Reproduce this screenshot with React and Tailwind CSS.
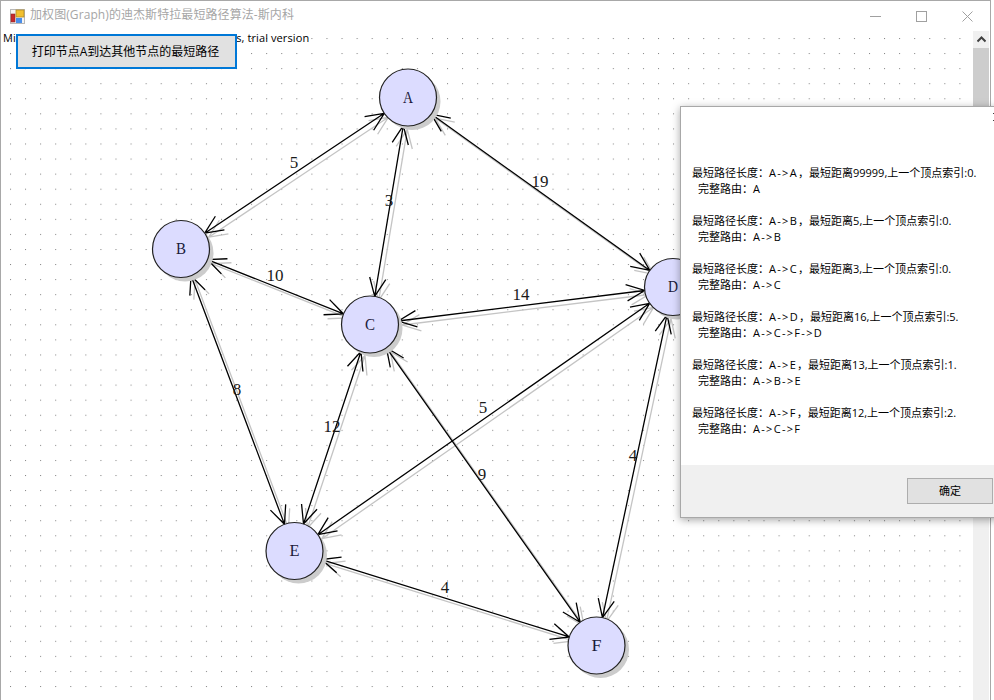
const CJK = '"Open Sans", "Noto Sans CJK SC", sans-serif';

const nodes = {
    A: [408, 97.5],
    B: [181, 249],
    C: [370, 324.5],
    D: [673, 287],
    E: [294.5, 551],
    F: [596.5, 645.5],
};

const edges = [
    ['A', 'B'], ['A', 'C'], ['A', 'D'], ['B', 'C'], ['C', 'D'],
    ['B', 'E'], ['C', 'E'], ['D', 'E'], ['C', 'F'], ['D', 'F'], ['E', 'F'],
];

const labels = [
    ['5', 294, 168], ['3', 389, 206], ['19', 540, 187], ['10', 275, 281], ['14', 521, 300],
    ['8', 237, 395], ['12', 332, 432], ['5', 483, 413], ['9', 482, 480], ['4', 633, 461], ['4', 445, 593],
];

const results = [
    ['A->A', '99999,', '0', 'A'],
    ['A->B', '5,', '0', 'A->B'],
    ['A->C', '3,', '0', 'A->C'],
    ['A->D', '16,', '5', 'A->C->F->D'],
    ['A->E', '13,', '1', 'A->B->E'],
    ['A->F', '12,', '2', 'A->C->F'],
];

const R = 28.5;

function head(x, y, ang) {
    const len = 20;
    const spread = 0.42;
    const p1 = [x + len * Math.cos(ang + spread), y + len * Math.sin(ang + spread)];
    const p2 = [x + len * Math.cos(ang - spread), y + len * Math.sin(ang - spread)];
    return `M${p1[0]} ${p1[1]}L${x} ${y}L${p2[0]} ${p2[1]}`;
}

function edgePath(a, b) {
    const [x1, y1] = nodes[a];
    const [x2, y2] = nodes[b];
    const ang = Math.atan2(y2 - y1, x2 - x1);
    const sx = x1 + R * Math.cos(ang);
    const sy = y1 + R * Math.sin(ang);
    const ex = x2 - R * Math.cos(ang);
    const ey = y2 - R * Math.sin(ang);
    return `M${sx} ${sy}L${ex} ${ey}` + head(sx, sy, ang) + head(ex, ey, ang + Math.PI);
}

function Graph() {
    return (
        <svg width="973" height="669" viewBox="1 31 973 669" className="absolute left-0 top-0">
            <defs>
                <pattern id="dots" x="10" y="38" width="15.07" height="15.07" patternUnits="userSpaceOnUse">
                    <rect width="1" height="1" fill="#808080" />
                </pattern>
            </defs>
            <rect x="0" y="31" width="975" height="671" fill="url(#dots)" />
            {edges.map(([a, b]) => (
                <path key={`s${a}${b}`} d={edgePath(a, b)} transform="translate(4 4)" fill="none" stroke="#c4c4c4" strokeWidth="1.3" />
            ))}
            {edges.map(([a, b]) => (
                <path key={a + b} d={edgePath(a, b)} fill="none" stroke="#000000" strokeWidth="1.3" />
            ))}
            {Object.entries(nodes).map(([name, [x, y]]) => (
                <g key={name}>
                    <circle cx={x + 4} cy={y + 4} r={R} fill="#cccccc" />
                    <circle cx={x} cy={y} r={R} fill="#dcdcff" stroke="#222222" strokeWidth="1.2" />
                    <text x={x - 5} y={y + 5} textLength="10" lengthAdjust="spacingAndGlyphs" fontFamily='"Liberation Serif", serif' fontSize="17" fill="#1a1a3a">{name}</text>
                </g>
            ))}
            {labels.map(([t, x, y], i) => (
                <text key={i} x={x} y={y} textAnchor="middle" fontFamily='"Liberation Serif", serif' fontSize="17" fill="#1a1a1a">{t}</text>
            ))}
        </svg>
    );
}

function AppIcon() {
    return (
        <svg width="15" height="15" viewBox="0 0 15 15">
            <rect x="0.5" y="0.5" width="14" height="14" fill="#f4f4f4" stroke="#b8b8b8" />
            <rect x="1" y="5" width="4" height="8" fill="#c8282c" stroke="#8a2a28" strokeWidth="0.6" />
            <rect x="6" y="1" width="8" height="7" fill="#f2c02e" stroke="#b08a28" strokeWidth="0.8" />
            <rect x="6" y="9" width="6" height="5" fill="#4a8ee8" />
        </svg>
    );
}

function TitleBar() {
    return (
        <div className="h-[30px] shrink-0 flex items-center pl-[9px] bg-white">
            <AppIcon />
            <span className="ml-[5px] text-[12px] tracking-[0.08px] text-[#a6a6a6] -mt-[2px]" style={{ fontFamily: CJK }}>加权图(Graph)的迪杰斯特拉最短路径算法-斯内科</span>
            <div className="ml-auto flex items-center mr-[17px] gap-[35px]">
                <svg width="11" height="11" viewBox="0 0 11 11"><path d="M0 5.5H11" stroke="#a0a0a0" /></svg>
                <svg width="11" height="11" viewBox="0 0 11 11"><rect x="0.5" y="0.5" width="10" height="10" fill="none" stroke="#a0a0a0" /></svg>
                <svg width="11" height="11" viewBox="0 0 11 11"><path d="M0.5 0.5L10.5 10.5M10.5 0.5L0.5 10.5" stroke="#a0a0a0" /></svg>
            </div>
        </div>
    );
}

function Scrollbar() {
    return (
        <div className="w-[16px] shrink-0 bg-[#f0f0f0] flex flex-col">
            <div className="h-[17px] flex items-center justify-center">
                <svg width="9" height="7" viewBox="0 0 9 7"><path d="M0.5 5.5L4.5 1.5L8.5 5.5" fill="none" stroke="#404040" strokeWidth="2" /></svg>
            </div>
            <div className="h-[420px] bg-[#cdcdcd]" />
        </div>
    );
}

function Arrow({ children }) {
    return <span className="tracking-[1.3px]">{children}</span>;
}

function ResultDialog() {
    return (
        <div className="absolute left-[680px] top-[106px] w-[320px] h-[412px] bg-white border border-[#a8a8a8] shadow-[0_2px_8px_rgba(0,0,0,0.35)] flex flex-col">
            <svg width="5" height="9" viewBox="0 0 5 9" className="absolute left-[312px] top-[6px]"><path d="M0 0L4 4L0 8" fill="none" stroke="#404040" /></svg>
            <div className="flex-1 pl-[11px] pt-[58px] text-[11px] leading-[16px] text-black" style={{ fontFamily: CJK }}>
                {results.map(([path, dist, prev, route], i) => (
                    <div key={i} className="mb-[16px] whitespace-nowrap">
                        <div>最短路径长度：<Arrow>{path}</Arrow>，最短距离{dist}上一个顶点索引:{prev}.</div>
                        <div className="pl-[6px]">完整路由：<Arrow>{route}</Arrow></div>
                    </div>
                ))}
            </div>
            <div className="h-[52px] bg-[#f0f0f0] pl-[226px] pt-[13px]">
                <div className="w-[86px] h-[26px] bg-[#e1e1e1] border border-[#adadad] flex items-center justify-center text-[11px] text-black" style={{ fontFamily: CJK }}>确定</div>
            </div>
        </div>
    );
}

export default function App() {
    return (
        <div className="relative w-[994px] h-[700px] overflow-hidden bg-white">
            <div className="w-[991px] h-[700px] border-l border-r border-t border-[#a8a8a8] flex flex-col bg-white">
                <TitleBar />
                <div className="flex-1 flex min-h-0">
                    <div className="relative flex-1">
                        <Graph />
                        <p className="relative text-[11px] leading-[14px] pl-[2px] tracking-[0.1px] text-black whitespace-nowrap" style={{ fontFamily: '"Open Sans", sans-serif' }}>MindFusion.Diagramming for Windows Forms, trial version</p>
                        <button className="absolute left-[15px] top-[3px] w-[221px] h-[35px] border-2 border-[#0078d7] bg-[#e1e1e1] text-[12px] text-black pr-[2px]" style={{ fontFamily: CJK }}>打印节点A到达其他节点的最短路径</button>
                    </div>
                    <Scrollbar />
                    <div className="w-px" />
                </div>
            </div>
            <ResultDialog />
        </div>
    );
}
